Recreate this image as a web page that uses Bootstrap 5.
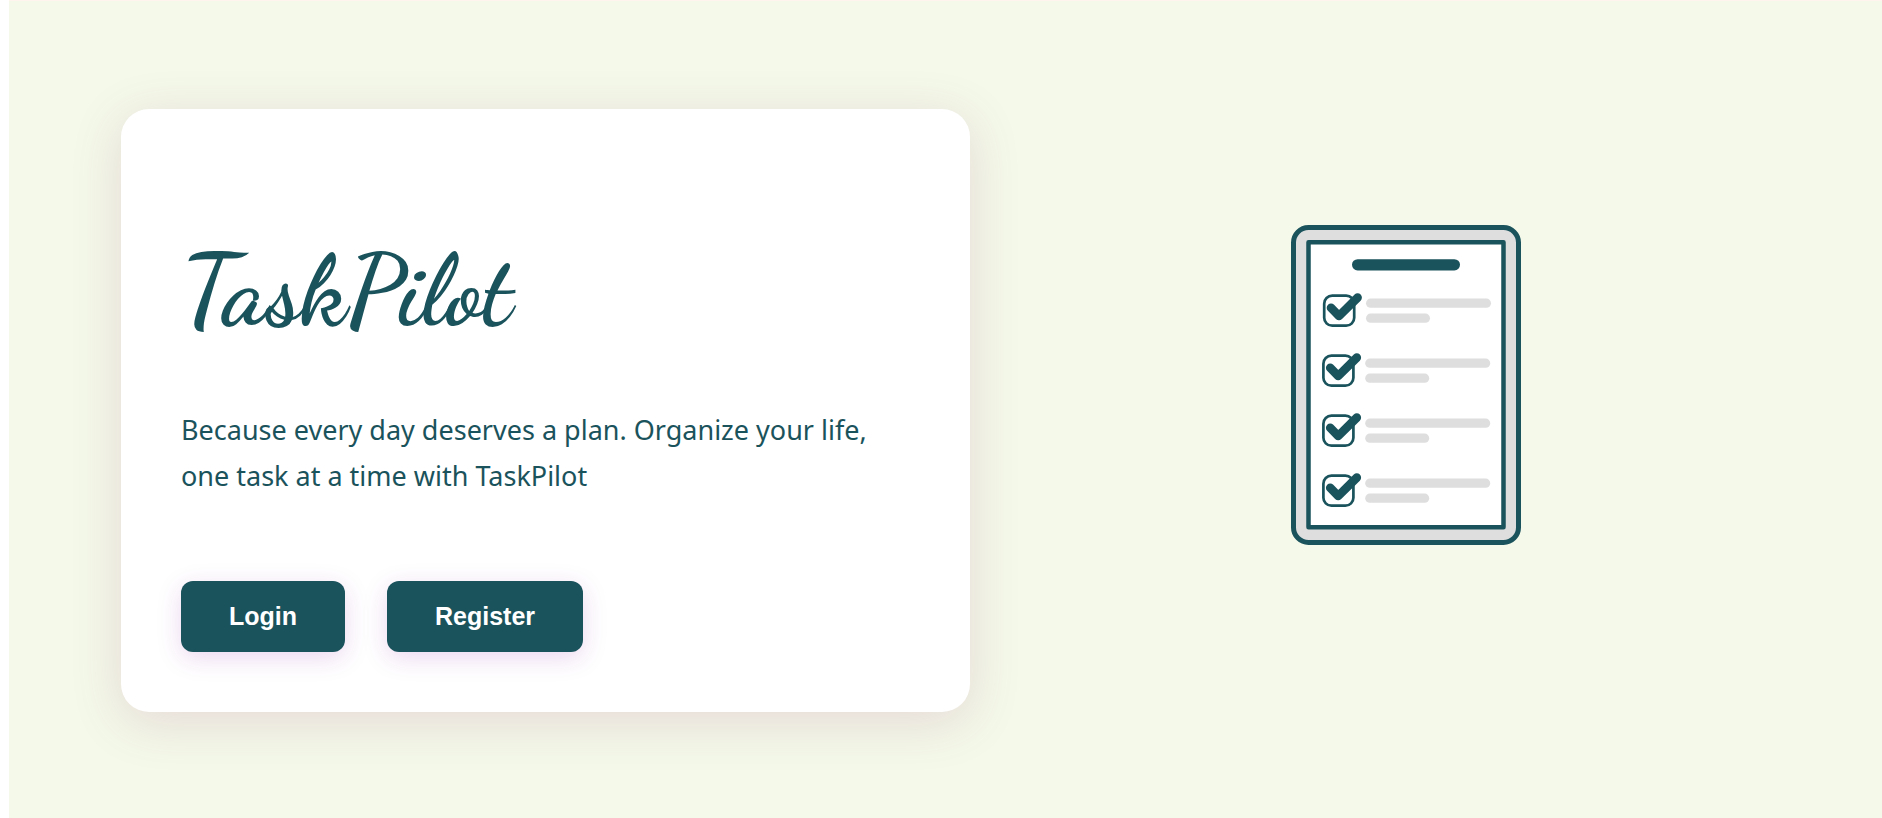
<!DOCTYPE html>
<html lang="en">
<head>
<meta charset="utf-8">
<meta name="viewport" content="width=device-width, initial-scale=1">
<title>TaskPilot</title>
<link href="https://cdn.jsdelivr.net/npm/bootstrap@5.3.0/dist/css/bootstrap.min.css" rel="stylesheet">
<style>
:root { --pilot: #1b535c; }
body { background: #f4f9e9; color: var(--pilot); border-left: 9px solid #fff; }
.landing { border-top: 1px solid #fff5ee; padding: 48px 24px 47px; display: grid; gap: 48px; }
.welcome {
  --bs-card-border-width: 0;
  --bs-card-border-radius: 28px;
  --bs-card-bg: #fff;
  color: var(--pilot);
  padding: 60px;
  box-shadow: 0 10px 50px rgba(172, 92, 142, .2);
}
.brand {
  font: 700 98px/120px "Dancing Script", "Liberation Serif", cursive;
  margin: 63px 0 55px;
}
.tagline { font: 400 27px/46px "Segoe UI", "Noto Sans", sans-serif; margin-bottom: 82px; }
.actions { gap: 42px; }
.btn-pilot {
  --bs-btn-bg: var(--pilot);
  --bs-btn-color: #fff;
  --bs-btn-hover-bg: #144049;
  --bs-btn-hover-color: #fff;
  --bs-btn-border-width: 0;
  --bs-btn-border-radius: 12px;
  --bs-btn-padding-x: 48px;
  --bs-btn-padding-y: 20px;
  font: 700 25px/31px "Liberation Sans", Arial, sans-serif;
  box-shadow: 0 6px 24px rgba(142, 36, 170, .18);
}
.checklist { width: 230px; margin-bottom: 50px; }
@media (min-width: 1200px) {
  .landing { grid-template-columns: 6fr 5fr; gap: 82px; padding: 48px 122px 47px 112px; }
}
</style>
</head>
<body>
<main class="landing min-vh-100 align-items-center">
  <section class="card welcome">
    <h1 class="brand">TaskPilot</h1>
    <p class="tagline">Because every day deserves a plan. Organize your life, one task at a time with TaskPilot</p>
    <div class="actions d-flex flex-wrap">
      <button type="button" class="btn btn-pilot">Login</button>
      <button type="button" class="btn btn-pilot">Register</button>
    </div>
  </section>
  <div class="text-center">
    <svg class="checklist" viewBox="0 0 230 320" role="img" aria-label="Checklist">
      <defs>
        <g id="entry">
          <rect x="33.2" y="70.7" width="30" height="30" rx="8" fill="#fff" stroke="#1b535c" stroke-width="2.7"/>
          <path d="M40 82.8 48 91 66.6 72.6" fill="none" stroke="#1b535c" stroke-width="8.6" stroke-linecap="round" stroke-linejoin="round"/>
          <rect x="75" y="73.6" width="125" height="9.2" rx="4.6" fill="#dedede"/>
          <rect x="75" y="88.6" width="64" height="9.2" rx="4.6" fill="#dedede"/>
        </g>
      </defs>
      <rect x="2.5" y="2.5" width="225" height="315" rx="15" fill="#dedede" stroke="#1b535c" stroke-width="5"/>
      <rect x="17.5" y="17.3" width="195" height="285" fill="#fff" stroke="#1b535c" stroke-width="4.5" stroke-linejoin="round"/>
      <rect x="61" y="34.2" width="108" height="11.2" rx="5.6" fill="#1b535c"/>
      <use href="#entry"/>
      <use href="#entry" x="-.8" y="60"/>
      <use href="#entry" x="-.8" y="120"/>
      <use href="#entry" x="-.8" y="180"/>
    </svg>
  </div>
</main>
<script src="https://cdn.jsdelivr.net/npm/bootstrap@5.3.0/dist/js/bootstrap.bundle.min.js"></script>
</body>
</html>
